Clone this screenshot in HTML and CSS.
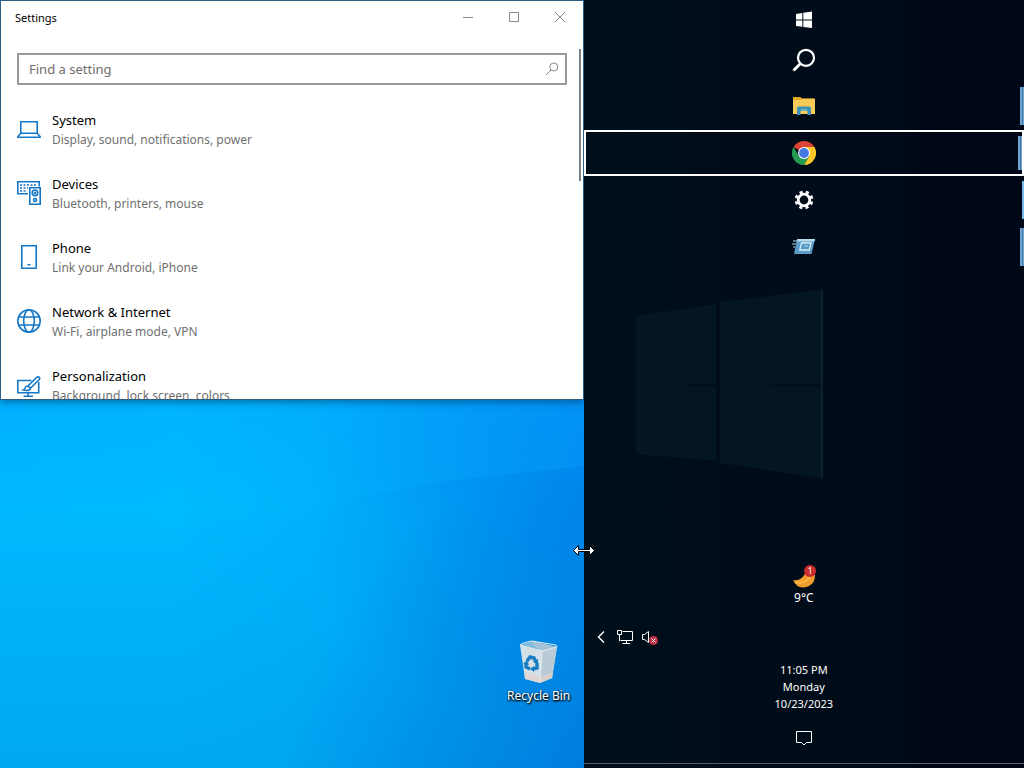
FILE: index.html
```html
<!DOCTYPE html>
<html lang="en">

<head>
  <meta charset="UTF-8">
  <meta name="viewport" content="width=device-width, initial-scale=1.0">
  <title>Settings</title>
  <link rel="stylesheet" href="styles.css">
</head>

<body>

  <!-- desktop -->
  <main class="desktop">
    <svg class="wallpaper" viewBox="0 0 584 768" preserveAspectRatio="none" aria-hidden="true">
      <defs>
        <linearGradient id="beam" x1="0" x2="1">
          <stop offset="0" stop-color="#00c0ff" stop-opacity="0" />
          <stop offset=".3" stop-color="#00c0ff" stop-opacity=".2" />
          <stop offset="1" stop-color="#0aa4ff" stop-opacity=".3" />
        </linearGradient>
      </defs>
      <path d="M0 400H584V466L430 483L310 508L180 528L0 548Z" fill="url(#beam)" />
    </svg>

    <!-- settings window -->
    <section class="window">
      <header class="titlebar">
        <h1>Settings</h1>
        <div class="controls">
          <button type="button" aria-label="Minimize">
            <svg width="12" height="12" viewBox="0 0 12 12"><path d="M1 6.500H11" /></svg>
          </button>
          <button type="button" aria-label="Maximize">
            <svg width="12" height="12" viewBox="0 0 12 12"><path d="M1.500 1.500H10.500V10.500H1.500Z" /></svg>
          </button>
          <button type="button" aria-label="Close">
            <svg width="12" height="12" viewBox="0 0 12 12"><path d="M1 1L11 11M11 1L1 11" /></svg>
          </button>
        </div>
      </header>

      <div class="window-body">
        <div class="content">
          <label class="search">
            <input type="text" placeholder="Find a setting" aria-label="Find a setting">
            <svg width="14" height="14" viewBox="0 0 14 14"><circle cx="8.800" cy="5" r="4" /><path d="M6 8L1 13" /></svg>
          </label>

          <nav class="menu">
            <a href="#">
              <svg width="24" height="24" viewBox="0 0 24 24"><path d="M3.800 4.800H20.200V16.200H3.800ZM3.800 16.200L.9 19.500V20.200H23.100V19.500L20.200 16.200" /></svg>
              <span class="text"><b>System</b><small>Display, sound, notifications, power</small></span>
            </a>
            <a href="#">
              <svg width="24" height="24" viewBox="0 0 24 24">
                <path d="M11 12.800H.8V.8H22.200V5.500" />
                <path d="M3 4H20.500M3 7H11M3 10H10" stroke-dasharray="2 1.500" />
                <path d="M12.800 6.800H23.200V23.200H12.800Z" />
                <circle cx="18" cy="11.800" r="2.800" /><circle cx="18" cy="11.800" r=".6" /><circle cx="18" cy="19" r="1.500" />
              </svg>
              <span class="text"><b>Devices</b><small>Bluetooth, printers, mouse</small></span>
            </a>
            <a href="#">
              <svg width="24" height="24" viewBox="0 0 24 24"><path d="M4.800 .8H19.200V23.200H4.800ZM10.500 19.800H13.500" /></svg>
              <span class="text"><b>Phone</b><small>Link your Android, iPhone</small></span>
            </a>
            <a href="#">
              <svg width="24" height="24" viewBox="0 0 24 24"><circle cx="12" cy="12" r="11.200" /><ellipse cx="12" cy="12" rx="5.300" ry="11.200" /><path d="M2 8H22M2 16H22" /></svg>
              <span class="text"><b>Network &amp; Internet</b><small>Wi-Fi, airplane mode, VPN</small></span>
            </a>
            <a href="#">
              <svg width="24" height="24" viewBox="0 -2 24 24">
                <path d="M14.500 5.500H.8V17.800H21.700V7M11.200 18V21.200M6.500 21.200H16" />
                <path d="M11 11L19.500 2.500Q21 1.300 22.200 2.200Q23.300 3.500 22 4.800L13.500 13.200ZM11 11Q8.500 11 8.200 13Q8 14.500 6.500 15Q12.500 16.500 13.500 13.200" />
              </svg>
              <span class="text"><b>Personalization</b><small>Background, lock screen, colors</small></span>
            </a>
          </nav>
        </div>
        <div class="scroll-thumb"></div>
      </div>
    </section>

    <!-- recycle bin -->
    <a class="shortcut" href="#">
      <svg width="48" height="48" viewBox="0 2 48 48">
        <path d="M5 8L10 42L25 46L37 41L42 10L27 14Z" fill="#d5dfe6" />
        <path d="M27 14L42 10L37 41L25 46Z" fill="#b8cbd7" />
        <path d="M5 8L17 4L42 10L27 14Z" fill="#7ebbdd" />
        <path d="M17 4L19 9L27 14L42 10Z" fill="#a6c4d5" />
        <path d="M9 36L25 40L38 35L37 41L25 46L10 42Z" fill="#e8d0c8" opacity=".65" />
        <path d="M5 8Q6 6 17 4L41 8L42 10L27 14L5 8M27 14L25 45" fill="none" stroke="#e4ebef" />
        <g fill="none" stroke="#167cc4" stroke-width="3.400">
          <path d="M12 24L15 20L19 21L21 25" /><path d="M22 26L22 31L18 32" /><path d="M15 32L11 30L11 26" />
        </g>
        <path d="M18 25L23 27L23 22ZM19 29L15 32L19 35ZM8 27L12 23L14 28Z" fill="#167cc4" />
      </svg>
      <span>Recycle Bin</span>
    </a>
  </main>

  <!-- taskbar -->
  <aside class="taskbar">
    <svg class="logo" width="188" height="192" viewBox="0 0 188 192" aria-hidden="true">
      <path d="M0 28L80 16V173L0 166Z" />
      <path d="M84 14L186 2V190L84 175Z" />
      <path class="gap" d="M50 97H80M134 97H186" />
      <path class="edge" d="M186 2V190" />
    </svg>

    <button class="start" type="button" aria-label="Start">
      <svg width="18" height="18" viewBox="0 0 18 18" fill="#fff"><path d="M1 3L7.300 2V8.400H1ZM8.300 1.800L17 .6V8.400H8.300ZM1 9.400H7.300V15.800L1 15ZM8.300 9.400H17V17L8.300 16Z" /></svg>
    </button>
    <button class="start" type="button" aria-label="Search">
      <svg width="24" height="24" viewBox="0 0 24 24" fill="none" stroke="#fff" stroke-width="2.200"><circle cx="14" cy="9.800" r="8" /><path d="M8.500 15.500L1.500 22.500" stroke-width="2.800" /></svg>
    </button>

    <div class="apps">
      <button type="button" aria-label="File Explorer">
        <svg width="24" height="24" viewBox="0 0 24 24">
          <path d="M1 3H8.500L10 4.500H22.500V20H1Z" fill="#e5a91f" />
          <path d="M1 6H9L10.500 4.800H23V20H1Z" fill="#f7cb55" />
          <path d="M5 21V14Q5 12.500 6.500 12.500H17.500Q19 12.500 19 14V21H15.500V17H8.500V21Z" fill="#3c91b8" />
          <path d="M9 15H15V17H9Z" fill="#6bb4ca" />
        </svg>
      </button>
      <button class="active" type="button" aria-label="Google Chrome">
        <svg width="24" height="24" viewBox="0 0 24 24">
          <path d="M12 12L1.600 6A12 12 0 0 1 22.400 6Z" fill="#dc4437" />
          <path d="M12 6H22.400A12 12 0 0 1 12 24L17.200 15Z" fill="#ffca28" />
          <path d="M1.600 6L6.800 15L12 18L17.200 15L12 24A12 12 0 0 1 1.600 6Z" fill="#249b50" />
          <circle cx="12" cy="12" r="6" fill="#fff" /><circle cx="12" cy="12" r="4.900" fill="#4278e2" />
        </svg>
      </button>
      <button type="button" aria-label="Settings">
        <svg width="20" height="20" viewBox="0 0 20 20" fill="none" stroke="#fff">
          <circle cx="10" cy="10" r="5.800" stroke-width="2.800" />
          <circle cx="10" cy="10" r="8" stroke-width="2.800" stroke-dasharray="3.140 3.143" stroke-dashoffset="-1.570" />
        </svg>
      </button>
      <button type="button" aria-label="Run">
        <svg width="24" height="20" viewBox="0 1 24 20">
          <path d="M5 3H23L19.500 18H2Z" fill="#5b9cc8" />
          <path d="M5.500 3H23L22.500 5.500H5Z" fill="#b6daee" />
          <path d="M9.500 7H19L17.300 14H7.800Z" fill="#5597c5" stroke="#d7edf8" stroke-width="1.300" />
          <path d="M12 10H16M1 5H5M0 8H4M1 11H3" stroke="#b6daee" stroke-width="1.200" />
        </svg>
      </button>
    </div>

    <div class="notify">
      <button class="weather" type="button">
        <svg width="26" height="26" viewBox="0 0 26 26">
          <path d="M2 16Q10 18 15 8L24 11Q24 19 18 22Q7 27 2 16Z" fill="#f09d2b" />
          <path d="M4 18Q12 21 19 13" fill="none" stroke="#ffb43f" stroke-width="2" />
          <circle cx="19" cy="7" r="6" fill="#cb2c2c" />
          <text x="19" y="10" text-anchor="middle">1</text>
        </svg>
        <span>9°C</span>
      </button>

      <div class="tray">
        <button type="button" aria-label="Show hidden icons">
          <svg width="8" height="16" viewBox="0 0 8 16"><path d="M7 2.500L1.500 8L7 13.500" stroke-width="1.400" /></svg>
        </button>
        <button type="button" aria-label="Network">
          <svg width="16" height="16" viewBox="0 0 16 16"><path d="M5.500 2.500H15.500V11.500H3.500M.5 1.500H4.500V5.500H.5ZM2.500 5.500V12M9.500 11.500V14.500M5.500 14.500H13" /></svg>
        </button>
        <button type="button" aria-label="Volume">
          <svg width="18" height="16" viewBox="0 0 18 16"><path d="M1.500 5.500H3.500L7.500 2.500V13.500L3.500 10.500H1.500Z" /><circle cx="12.500" cy="11.500" r="4.500" fill="#bd3044" stroke="none" /><path d="M10.500 9.500L14.500 13.500M14.500 9.500L10.500 13.500" /></svg>
        </button>
      </div>

      <button class="clock" type="button">
        <span>11:05 PM</span>
        <span>Monday</span>
        <span>10/23/2023</span>
      </button>

      <button class="action" type="button" aria-label="Notifications">
        <svg width="18" height="18" viewBox="0 0 18 18"><path d="M1.500 2.500H16.500V13.500H11.500L9 16L6.500 13.500H1.500Z" /></svg>
      </button>
      <button class="show-desktop" type="button" aria-label="Show desktop"></button>
    </div>
  </aside>

  <!-- resize pointer -->
  <svg class="pointer" width="24" height="12" viewBox="0 0 24 12" aria-hidden="true">
    <path d="M1.500 6.500L6.500 1.500V5.500H17.500V1.500L22.500 6.500L17.500 11.500V7.500H6.500V11.500Z" />
  </svg>

</body>

</html>
```
FILE: styles.css
```css
* {
  margin: 0;
  padding: 0;
  box-sizing: border-box;
}

body {
  display: grid;
  grid-template-columns: 57fr 43fr;
  height: 100vh;
  overflow: hidden;
  position: relative;
  font-family: "Segoe UI", "Noto Sans", "Open Sans", sans-serif;
  font-size: 12px;
}

button {
  display: flex;
  align-items: center;
  justify-content: center;
  border: 0;
  background: none;
  color: inherit;
  font: inherit;
  cursor: pointer;
}

a {
  color: inherit;
  text-decoration: none;
}

svg {
  display: block;
  flex: none;
}

/* desktop */
.desktop {
  display: flex;
  flex-direction: column;
  justify-content: space-between;
  position: relative;
  min-width: 0;
  background:
    radial-gradient(ellipse 60% 45% at 108% 104%, rgba(0, 108, 212, .8), rgba(0, 140, 235, 0)),
    radial-gradient(ellipse 60% 30% at 112% 68%, rgba(0, 116, 225, .65), rgba(0, 140, 240, 0)),
    radial-gradient(ellipse 60% 24% at 110% 53%, rgba(0, 128, 255, .5), rgba(0, 150, 255, 0)),
    linear-gradient(90deg, rgba(0, 160, 240, 0) 30%, rgba(0, 155, 238, .6)),
    linear-gradient(#00b0ff 52%, #00b8ff 66%, #00b0f8 84%, #00a8f2);
}

.wallpaper {
  position: absolute;
  width: 100%;
  height: 100%;
}

/* settings window */
.window {
  display: flex;
  flex-direction: column;
  position: relative;
  height: 400px;
  border: 1px solid #2f5f80;
  background-color: #fff;
  box-shadow: 0 2px 8px rgba(0, 40, 80, .5);
  overflow: hidden;
}

.titlebar {
  display: flex;
  flex: none;
  justify-content: space-between;
  height: 48px;
}

.titlebar h1 {
  padding-left: 14px;
  font-size: 11px;
  font-weight: 400;
  line-height: 34px;
}

.controls {
  display: flex;
  height: 32px;
}

.controls button {
  width: 46px;
}

.controls svg,
.search svg {
  fill: none;
  stroke: #888;
}

.window-body {
  display: flex;
  flex: 1;
  min-height: 0;
}

.content {
  flex: 1;
  padding: 4px 12px 0 16px;
}

.search {
  display: flex;
  align-items: center;
  height: 32px;
  margin-bottom: 13px;
  padding: 0 6px 0 10px;
  border: 2px solid #999;
}

.search input {
  flex: 1;
  min-width: 0;
  border: 0;
  outline: 0;
  background: none;
  font: inherit;
  font-size: 13px;
}

.search input::placeholder {
  color: #6e6e6e;
}

.menu a {
  display: flex;
  align-items: center;
  gap: 11px;
  height: 64px;
}

.menu svg {
  margin-bottom: 2px;
  fill: none;
  stroke: #1478c8;
  stroke-width: 1.6;
}

.text {
  display: flex;
  flex-direction: column;
  line-height: 19px;
}

.text b {
  font-size: 13px;
  font-weight: 400;
}

.text small {
  color: #707070;
  font-size: 12px;
}

.scroll-thumb {
  width: 2px;
  height: 132px;
  margin-right: 2px;
  background-color: #7a8088;
}

/* recycle bin */
.shortcut {
  display: flex;
  flex-direction: column;
  align-items: center;
  align-self: flex-end;
  position: relative;
  width: 76px;
  margin: 0 7px 63px 0;
  color: #fff;
  line-height: 18px;
  text-shadow: 1px 1px 2px #000, 0 1px 2px #000;
}

/* taskbar */
.taskbar {
  display: flex;
  flex-direction: column;
  position: relative;
  min-width: 0;
  background: linear-gradient(90deg, #000f19, #000c19 50%, #000818 80%);
  color: #fff;
}

/* faint window logo of the wallpaper, seen through the bar */
.logo {
  position: absolute;
  left: 52px;
  top: 288px;
  fill: #041720;
}

.logo .gap {
  stroke: #000f19;
  stroke-width: 3;
}

.logo .edge {
  stroke: #0b2329;
  stroke-width: 2;
}

.start {
  height: 40px;
}

.apps {
  display: flex;
  flex-direction: column;
  gap: 1px;
  margin-top: 3px;
}

.apps button {
  position: relative;
  height: 46px;
}

/* running indicator */
.apps button::after {
  content: "";
  position: absolute;
  top: 4px;
  right: 0;
  bottom: 4px;
  width: 4px;
  background: linear-gradient(90deg, #6fa3cf 50%, #3f78aa 50%, #3f78aa 75%, #6fa3cf 75%);
}

.apps button:nth-child(3)::after {
  width: 2px;
  background: #76b9ed;
}

.apps .active {
  border: 2px solid #fff;
}

.notify {
  display: flex;
  flex-direction: column;
  margin-top: auto;
}

.weather {
  flex-direction: column;
  height: 48px;
  margin-bottom: 20px;
  line-height: 16px;
}

.weather text {
  fill: #fff;
  font-size: 9px;
}

.tray {
  display: flex;
  gap: 8px;
  margin-bottom: 16px;
  padding-left: 13px;
}

.tray button:first-child {
  width: 12px;
  justify-content: flex-start;
}

.tray svg,
.action svg {
  fill: none;
  stroke: #fff;
}

.clock {
  flex-direction: column;
  margin-bottom: 11px;
  font-size: 11px;
  line-height: 17px;
}

.action {
  height: 30px;
  margin-bottom: 10px;
}

.show-desktop {
  height: 5px;
  border-top: 1px solid #56606b;
}

/* resize pointer on the taskbar edge */
.pointer {
  position: absolute;
  left: 57%;
  top: 544px;
  transform: translateX(-50%);
  fill: #fff;
  stroke: #000;
}
```
